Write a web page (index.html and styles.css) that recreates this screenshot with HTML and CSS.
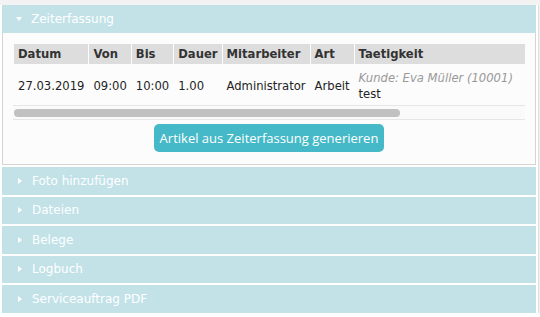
FILE: index.html
```html
<!DOCTYPE html>
<html lang="de">
<head>
  <meta charset="UTF-8">
  <meta name="viewport" content="width=device-width, initial-scale=1.0">
  <title>Serviceauftrag</title>
  <link rel="stylesheet" href="styles.css">
</head>
<body>
  <div class="topbar"></div>
  <div class="layout">
    <div class="accordion">
      <div class="acc-header open"><span class="arrow down"></span>Zeiterfassung</div>
      <div class="acc-panel">
        <div class="table-wrap">
          <table class="times">
            <thead>
              <tr>
                <th>Datum</th>
                <th>Von</th>
                <th>Bis</th>
                <th>Dauer</th>
                <th>Mitarbeiter</th>
                <th>Art</th>
                <th class="wide">Taetigkeit</th>
              </tr>
            </thead>
            <tbody>
              <tr>
                <td>27.03.2019</td>
                <td>09:00</td>
                <td>10:00</td>
                <td>1.00</td>
                <td>Administrator</td>
                <td>Arbeit</td>
                <td class="wide"><span class="customer">Kunde: Eva Müller (10001)</span><br>test</td>
              </tr>
            </tbody>
          </table>
        </div>
        <div class="hscroll"><div class="hscroll-thumb"></div></div>
        <div class="actions">
          <button type="button" class="btn">Artikel aus Zeiterfassung generieren</button>
        </div>
      </div>

      <div class="acc-header"><span class="arrow right"></span>Foto hinzufügen</div>
      <div class="acc-header"><span class="arrow right"></span>Dateien</div>
      <div class="acc-header"><span class="arrow right"></span>Belege</div>
      <div class="acc-header"><span class="arrow right"></span>Logbuch</div>
      <div class="acc-header"><span class="arrow right"></span>Serviceauftrag PDF</div>
    </div>
    <div class="edge"></div>
  </div>
</body>
</html>
```

FILE: styles.css
```css
body {
  margin: 0;
  background: #ffffff;
  font-family: "DejaVu Sans", Verdana, sans-serif;
  font-size: 12px;
  color: #333333;
}

.topbar {
  height: 5px;
  background: #f3f3f3;
}

.layout {
  display: flex;
}

.accordion {
  width: 534px;
  margin-left: 2px;
}

.edge {
  width: 2px;
  margin-left: 2px;
  border-left: 1px solid #dedede;
  background: #f1f1f1;
}

.acc-header {
  display: flex;
  align-items: center;
  height: 27.5px;
  margin-top: 2px;
  padding-left: 12px;
  background: #c2e2e8;
  color: #ffffff;
  font-size: 12px;
}

.acc-header.open {
  height: 28px;
  margin-top: 0;
}

.arrow {
  display: inline-block;
  width: 0;
  height: 0;
}

.arrow.down {
  margin-left: 2px;
  margin-right: 9px;
  border-left: 3px solid transparent;
  border-right: 3px solid transparent;
  border-top: 4px solid #ffffff;
}

.arrow.right {
  margin-left: 4px;
  margin-right: 10px;
  border-top: 3px solid transparent;
  border-bottom: 3px solid transparent;
  border-left: 4px solid #ffffff;
}

.acc-panel {
  padding: 11px 10px 12px 10px;
  background: #fcfcfc;
  border: 1px solid #d4d4d4;
  border-top: none;
}

.table-wrap {
  overflow: hidden;
}

.times {
  width: 677px;
  border-collapse: separate;
  border-spacing: 1px 0;
  line-height: 16px;
  font-size: 11.6px;
}

.times th,
.times td {
  white-space: nowrap;
  text-align: left;
}

.times th {
  padding: 2px 4px;
  background: #dddddd;
  font-weight: bold;
  color: #333333;
}

.times td {
  padding: 6px 4px 3px 4px;
  vertical-align: middle;
  color: #222222;
}

.times .wide {
  width: 100%;
}

.customer {
  font-style: italic;
  color: #999999;
}

.hscroll {
  height: 13px;
  background: #fafafa;
  border-top: 1px solid #e6e6e6;
  border-bottom: 1px solid #e6e6e6;
}

.hscroll-thumb {
  width: 386px;
  height: 8px;
  margin: 3px 0 0 1px;
  border-radius: 4px;
  background: #c1c1c1;
}

.actions {
  display: flex;
  justify-content: center;
  margin-top: 4px;
}

.btn {
  height: 28px;
  padding: 0 6px;
  border: none;
  border-radius: 5px;
  background: #45b9c7;
  color: #ffffff;
  font-family: "Open Sans", sans-serif;
  font-size: 13px;
  cursor: pointer;
}
```
